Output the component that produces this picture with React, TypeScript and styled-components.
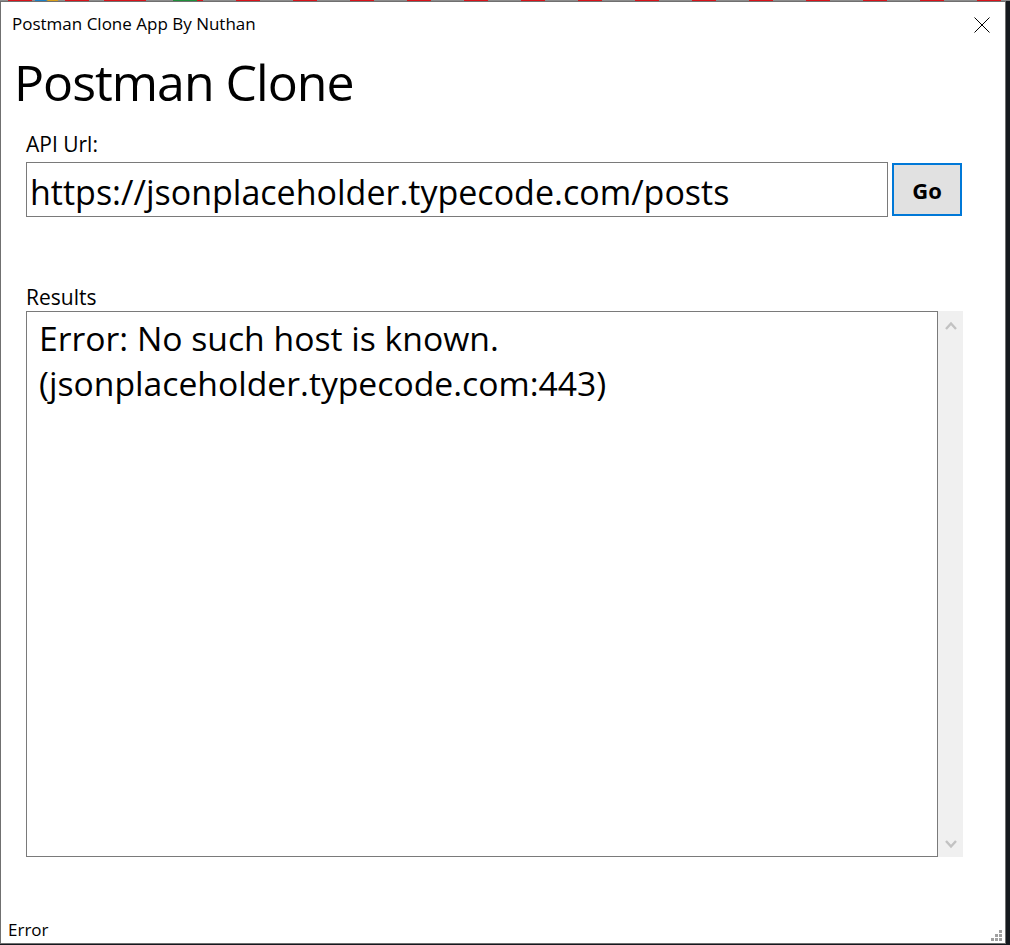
import React from "react";
import styled, { createGlobalStyle } from "styled-components";

const Global = createGlobalStyle`
  html, body { margin: 0; padding: 0; }
  body {
    width: 1010px;
    height: 945px;
    overflow: hidden;
    background: #15191e;
    font-family: "Open Sans", "Noto Sans", "DejaVu Sans", sans-serif;
    color: #000;
  }
`;

const Desktop = styled.div`
  width: 1010px;
  height: 945px;
  box-sizing: border-box;
  padding-top: 1px;
  background:
    linear-gradient(90deg, transparent 0 35px, #1c7fc4 35px 46px, #d9a01a 48px 58px, transparent 58px 104px, #d9141b 104px 128px, transparent 128px 173px, #1f8f3a 173px 197px, transparent 197px) 0 0 / 230px 1px no-repeat,
    repeating-linear-gradient(90deg, #8c8c8c 0 8px, #d9141b 8px 32px, #8c8c8c 32px 57px) 0 0 / 100% 1px no-repeat,
    #15191e;
`;

const Window = styled.div`
  width: 1006px;
  height: 943px;
  box-sizing: border-box;
  border: 1px solid #707070;
  background: #fff;
  display: flex;
  flex-direction: column;
`;

const TitleBar = styled.div`
  height: 44px;
  display: flex;
  align-items: flex-start;
  justify-content: space-between;
  padding: 0 15px 0 11px;
`;

const TitleText = styled.div`
  font-size: 17px;
  line-height: 20px;
  padding-top: 12px;
`;

const CloseButton = styled.div`
  width: 16px;
  height: 16px;
  margin-top: 15px;
  display: flex;
`;

const Heading = styled.h1`
  margin: 0 0 0 13px;
  font-weight: 400;
  font-size: 50px;
  line-height: 70px;
  height: 70px;
  padding-top: 1px;
  box-sizing: border-box;
  letter-spacing: -1px;
`;

const Form = styled.div`
  padding: 0 42px 0 25px;
  display: flex;
  flex-direction: column;
  flex: 1;
`;

const FieldLabel = styled.div<{ $top: number }>`
  font-size: 21px;
  line-height: 28px;
  margin-top: ${(p) => p.$top}px;
`;

const UrlRow = styled.div`
  display: flex;
  align-items: center;
  gap: 4px;
  margin-top: 4px;
`;

const UrlInput = styled.div`
  width: 862px;
  height: 55px;
  box-sizing: border-box;
  border: 1px solid #7a7a7a;
  font-size: 34px;
  line-height: 53px;
  padding: 3px 0 0 3px;
  white-space: nowrap;
  overflow: hidden;
`;

const GoButton = styled.div`
  width: 70px;
  height: 53px;
  box-sizing: border-box;
  border: 2px solid #0078d7;
  background: #e1e1e1;
  font-weight: 700;
  font-size: 22px;
  display: flex;
  align-items: center;
  justify-content: center;
`;

const ResultsRow = styled.div`
  display: flex;
  height: 546px;
`;

const ResultsBox = styled.div`
  width: 912px;
  box-sizing: border-box;
  border: 1px solid #7a7a7a;
  padding: 4px 12px;
  font-size: 33.7px;
  line-height: 45px;
`;

const ScrollBar = styled.div`
  width: 25px;
  background: #f0f0f0;
  display: flex;
  flex-direction: column;
  justify-content: space-between;
  align-items: center;
  padding: 10px 0 8px;
  box-sizing: border-box;
`;

const StatusBar = styled.div`
  display: flex;
  justify-content: space-between;
  align-items: flex-end;
  padding: 0 3px 2px 7px;
  height: 28px;
`;

const StatusText = styled.div`
  font-size: 17px;
  line-height: 22px;
`;

const Chevron = ({ up }: { up?: boolean }) => (
  <svg width="12" height="9" viewBox="0 0 12 9">
    <path
      d={up ? "M1 8 L6 2.5 L11 8" : "M1 1 L6 6.5 L11 1"}
      fill="none"
      stroke="#c2c2c2"
      strokeWidth="2.4"
    />
  </svg>
);

const Grip = () => (
  <svg width="11" height="11" viewBox="0 0 11 11">
    {[
      [8, 0],
      [4, 4],
      [8, 4],
      [0, 8],
      [4, 8],
      [8, 8],
    ].map(([x, y], i) => (
      <rect key={i} x={x} y={y} width="3" height="3" fill="#a0a0a0" />
    ))}
  </svg>
);

export default function App() {
  return (
    <>
      <Global />
      <Desktop>
        <Window>
          <TitleBar>
            <TitleText>Postman Clone App By Nuthan</TitleText>
            <CloseButton>
              <svg width="16" height="16" viewBox="0 0 16 16">
                <path d="M0.5 0.5 L15.5 15.5 M15.5 0.5 L0.5 15.5" stroke="#000" strokeWidth="1" />
              </svg>
            </CloseButton>
          </TitleBar>
          <Heading>Postman Clone</Heading>
          <Form>
            <FieldLabel $top={14}>API Url:</FieldLabel>
            <UrlRow>
              <UrlInput>https://jsonplaceholder.typecode.com/posts</UrlInput>
              <GoButton>Go</GoButton>
            </UrlRow>
            <FieldLabel $top={66}>Results</FieldLabel>
            <ResultsRow>
              <ResultsBox>
                Error: No such host is known.
                <br />
                (jsonplaceholder.typecode.com:443)
              </ResultsBox>
              <ScrollBar>
                <Chevron up />
                <Chevron />
              </ScrollBar>
            </ResultsRow>
          </Form>
          <StatusBar>
            <StatusText>Error</StatusText>
            <Grip />
          </StatusBar>
        </Window>
      </Desktop>
    </>
  );
}
